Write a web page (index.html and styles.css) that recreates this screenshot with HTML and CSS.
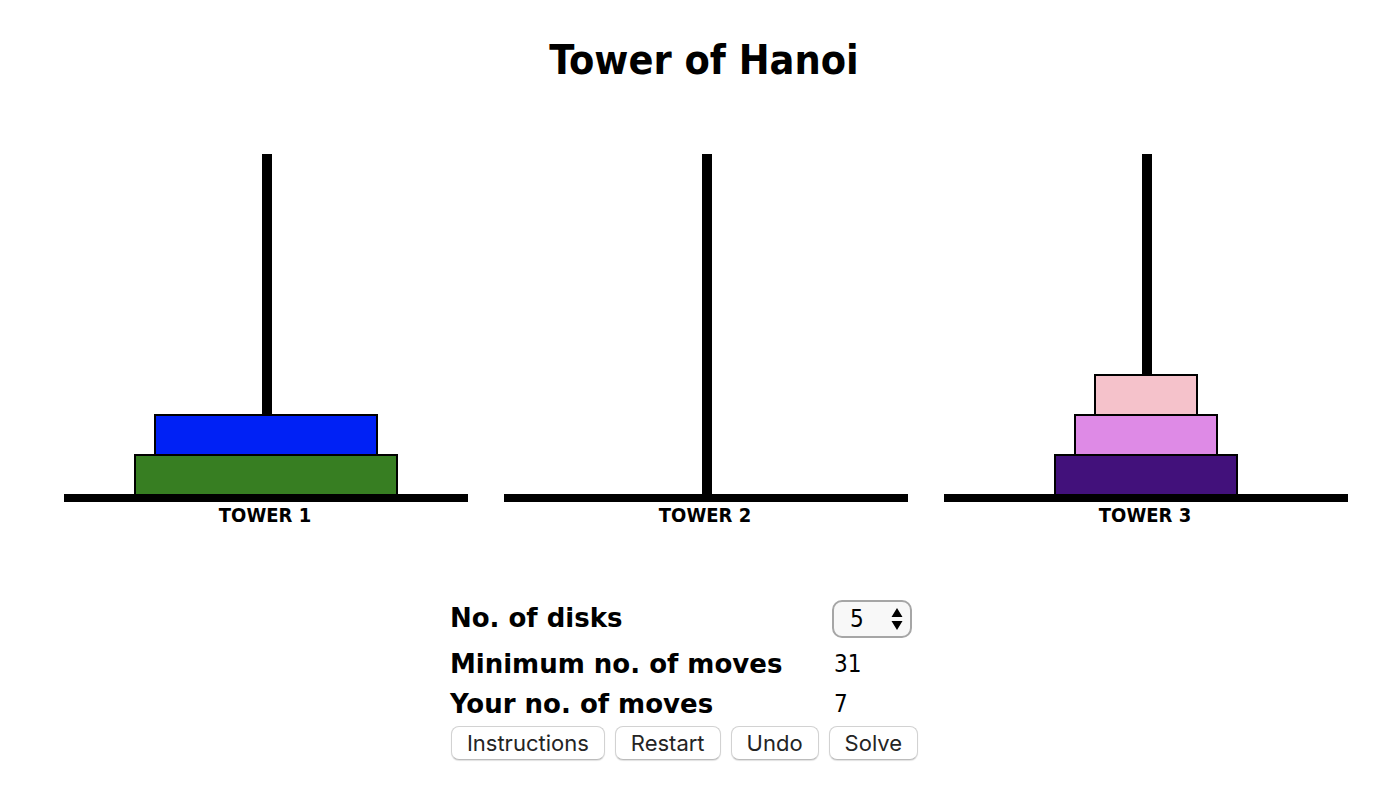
FILE: index.html
```
<!DOCTYPE html>
<html lang="en">
<head>
<meta charset="utf-8">
<meta name="viewport" content="width=device-width, initial-scale=1">
<title>Tower of Hanoi</title>
<link rel="stylesheet" href="styles.css">
</head>
<body>
<main class="page">
  <h1 class="title">Tower of Hanoi</h1>
  <section class="towers">
    <figure class="tower">
      <div class="rod">
        <div class="disk disk-4"></div>
        <div class="disk disk-5"></div>
      </div>
      <figcaption class="tower-name">TOWER 1</figcaption>
    </figure>
    <figure class="tower">
      <div class="rod"></div>
      <figcaption class="tower-name">TOWER 2</figcaption>
    </figure>
    <figure class="tower">
      <div class="rod">
        <div class="disk disk-1"></div>
        <div class="disk disk-2"></div>
        <div class="disk disk-3"></div>
      </div>
      <figcaption class="tower-name">TOWER 3</figcaption>
    </figure>
  </section>
  <section class="panel">
    <div class="controls">
      <table class="stats">
        <tr class="row-disks">
          <th scope="row"><label for="disks">No. of disks</label></th>
          <td>
            <div class="picker">
              <select id="disks">
                <option>3</option><option>4</option><option selected>5</option><option>6</option><option>7</option>
              </select>
              <svg class="arrows" viewBox="0 0 12 22" aria-hidden="true"><path d="M6 0l5.500 9h-11zM6 22l5.500-9h-11z"/></svg>
            </div>
          </td>
        </tr>
        <tr><th scope="row">Minimum no. of moves</th><td><span class="value">31</span></td></tr>
        <tr><th scope="row">Your no. of moves</th><td><span class="value">7</span></td></tr>
      </table>
      <div class="buttons">
        <button type="button">Instructions</button>
        <button type="button">Restart</button>
        <button type="button">Undo</button>
        <button type="button">Solve</button>
      </div>
    </div>
  </section>
</main>
</body>
</html>
```
FILE: styles.css
```
* { box-sizing: border-box; }

body {
  margin: 0;
  background: #fff;
  color: #000;
  font-family: Tahoma, "DejaVu Sans Condensed", "Noto Sans", sans-serif;
}

.page { padding: 36px 36px 36px 64px; }

.title {
  margin: 0 0 70px;
  padding-right: 4px;
  font-size: 41px;
  line-height: 48px;
  text-align: center;
}

.towers {
  display: grid;
  grid-template-columns: repeat(3, 1fr);
  gap: 36px;
}

.tower { margin: 0; }

.rod {
  display: flex;
  flex-direction: column;
  align-items: center;
  justify-content: flex-end;
  height: 348px;
  border-bottom: 8px solid #000;
  background: linear-gradient(#000, #000) calc(50% + 1px) 0 / 10px 100% no-repeat;
}

.disk {
  height: 40px;
  border: 2px solid #000;
  border-bottom: 0;
}

.disk-1 { width: 104px; background: #f5c2cb; }
.disk-2 { width: 144px; background: #de8ae6; }
.disk-3 { width: 184px; background: #42117b; }
.disk-4 { width: 224px; background: #0021f5; }
.disk-5 { width: 264px; background: #377e22; }

.tower-name {
  padding-right: 2px;
  font-size: 20px;
  font-weight: 700;
  line-height: 26px;
  text-align: center;
}

.panel {
  display: flex;
  justify-content: center;
  padding: 70px 44px 0 0;
}

.stats { border-collapse: collapse; }

.stats th {
  width: 382px;
  height: 40px;
  padding: 0;
  font-family: Verdana, "DejaVu Sans", sans-serif;
  font-size: 26px;
  line-height: 40px;
  text-align: left;
}

.stats td { padding: 0; font-size: 24px; }
.row-disks th { height: 46px; vertical-align: top; }
.stats .row-disks td { vertical-align: top; padding-top: 2px; }
.value { padding-left: 2px; }

.picker { display: grid; width: 80px; }

.picker select {
  grid-area: 1 / 1;
  appearance: none;
  height: 38px;
  padding: 0 16px;
  border: 2px solid #a6a6a6;
  border-radius: 10px;
  background: #f8f8f8;
  color: #000;
  font: inherit;
}

.arrows {
  grid-area: 1 / 1;
  place-self: center end;
  width: 12px;
  height: 22px;
  margin-right: 9px;
  pointer-events: none;
}

.buttons { display: flex; gap: 10px; padding: 2px 0 0 1px; }

.buttons button {
  height: 34px;
  padding: 0 15px;
  border: 1px solid #d2d2d2;
  border-bottom-color: #bcbcbc;
  border-radius: 8px;
  background: #fff;
  box-shadow: 0 1px 1px #e2e2e2;
  color: #242424;
  font-family: Inter, sans-serif;
  font-size: 22px;
  line-height: 32px;
}
```
